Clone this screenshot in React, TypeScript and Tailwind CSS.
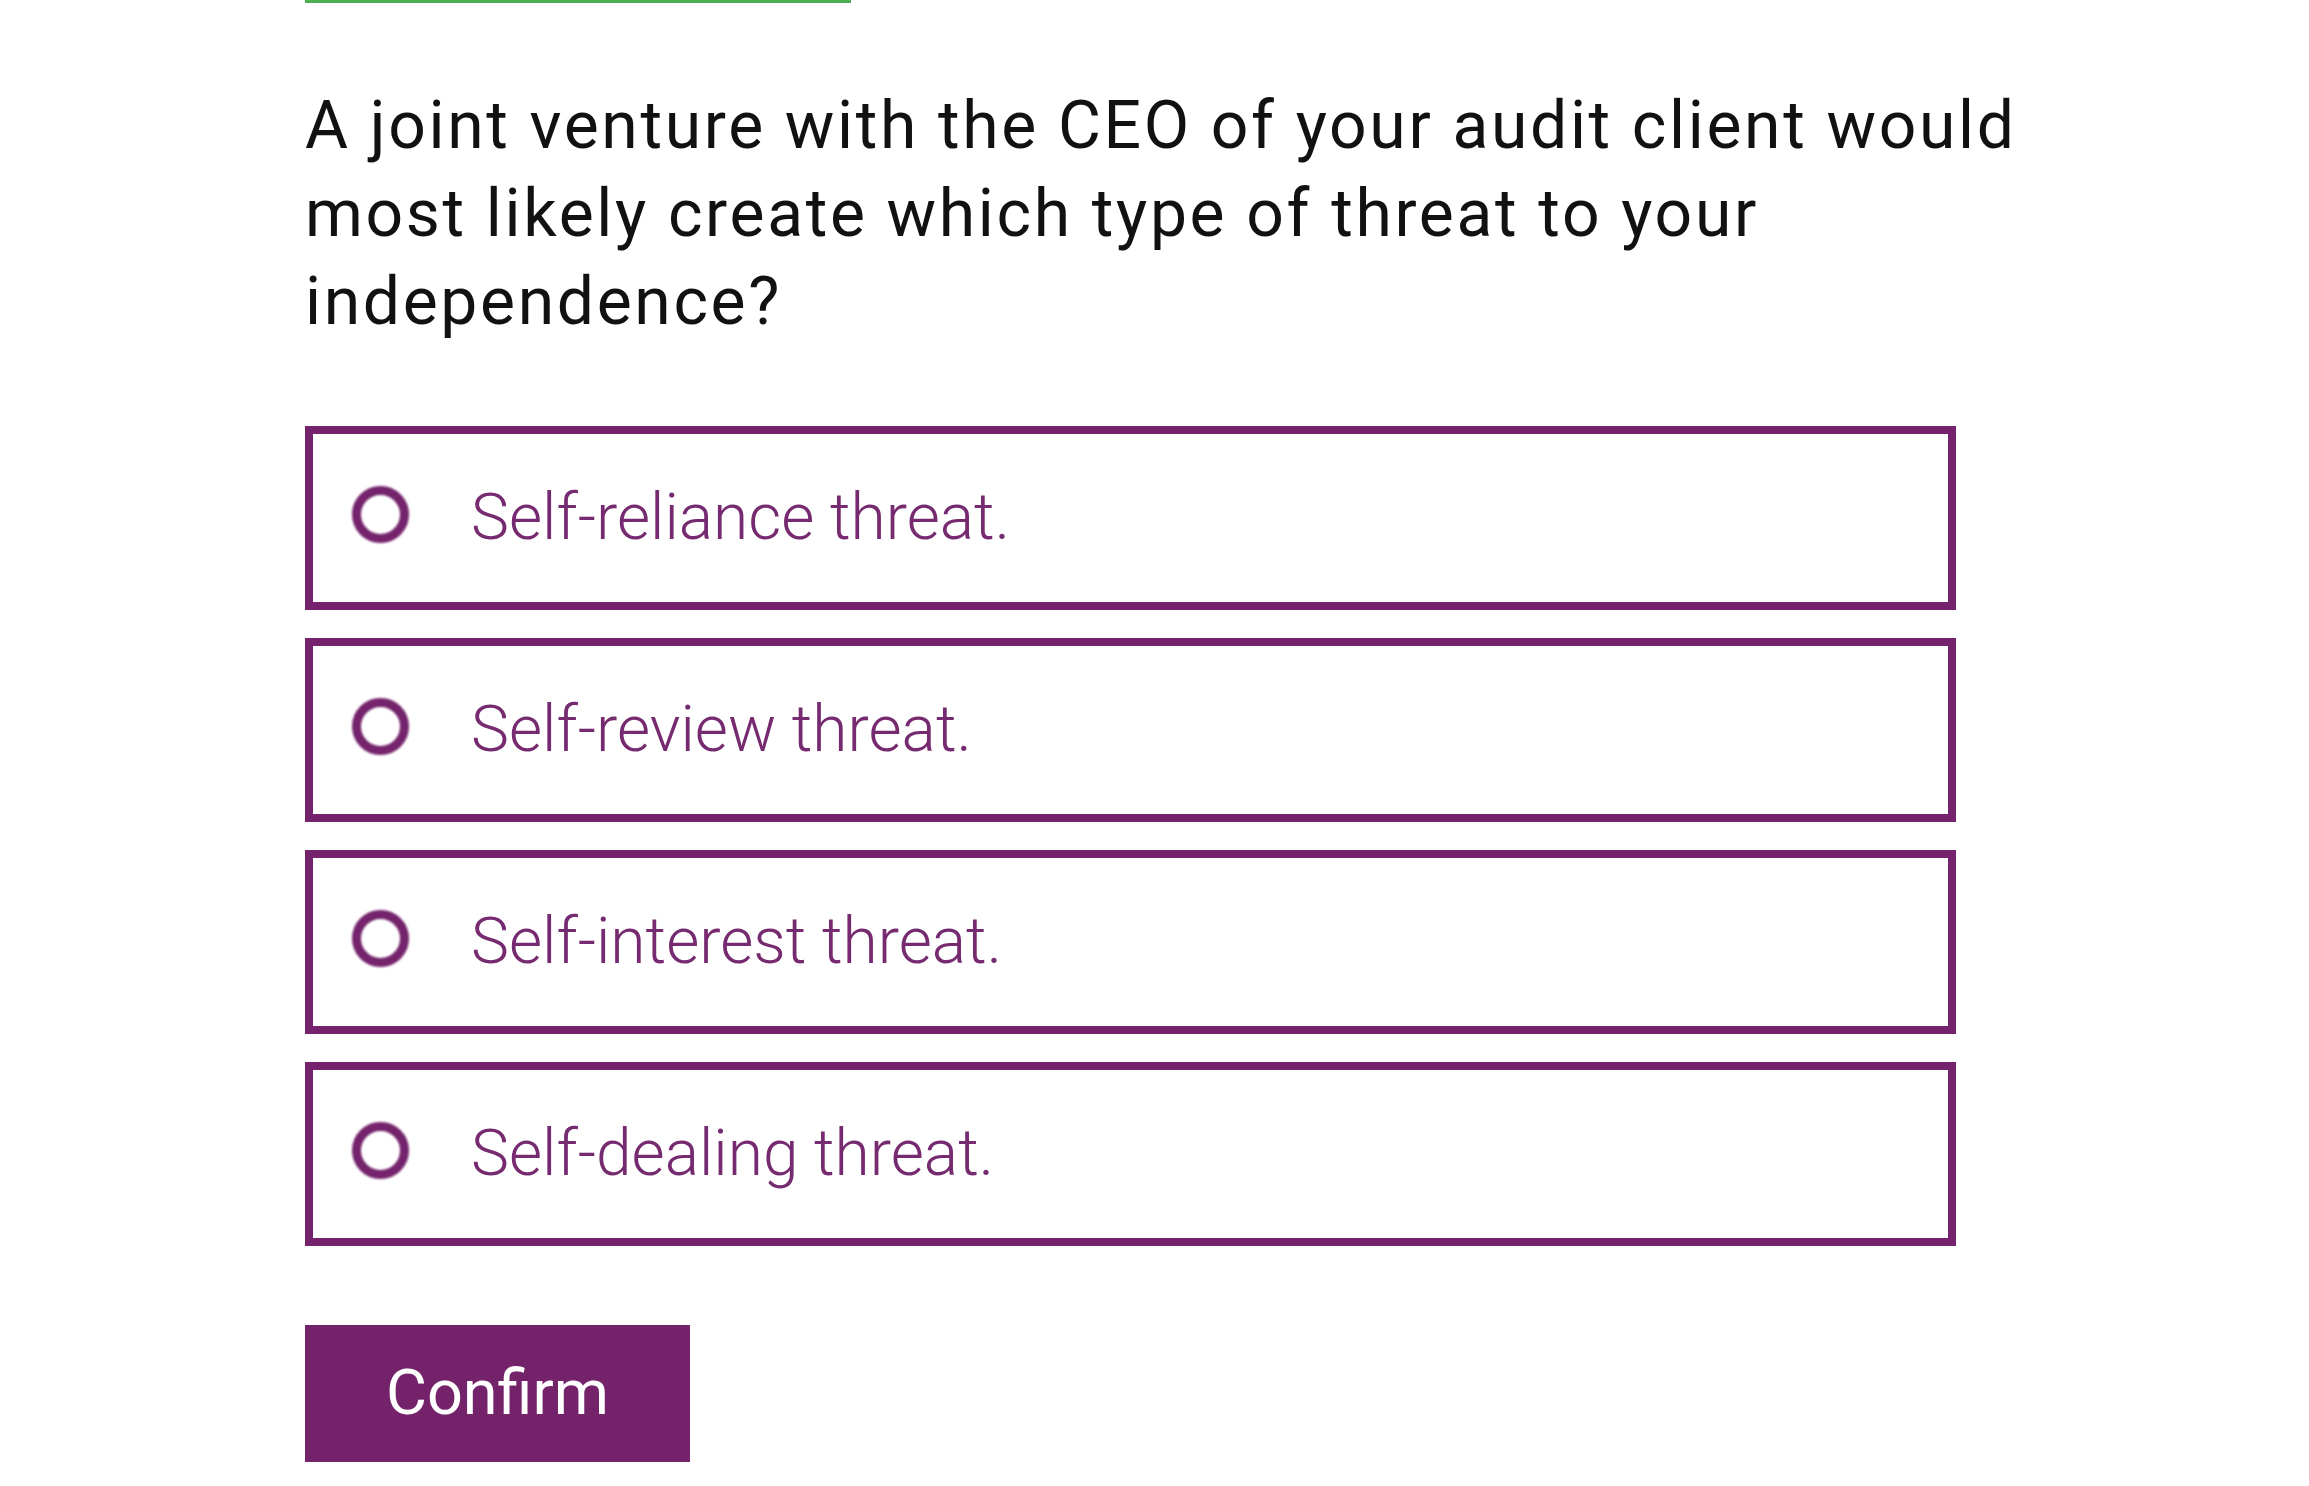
export default function App() {
  const options = [
    "Self-reliance threat.",
    "Self-review threat.",
    "Self-interest threat.",
    "Self-dealing threat.",
  ];

  return (
    <div className="min-h-screen w-full bg-white font-['Roboto',sans-serif]">
      <div className="ml-[305px] flex flex-col">
        {/* progress bar */}
        <div className="h-[3px] w-[546px] bg-[#4caf50]" />

        <h1 className="mt-[79px] w-[1820px] text-[66px] font-normal leading-[88px] tracking-[2.65px] text-[#111111]">
          A joint venture with the CEO of your audit client would most likely create which type of threat to your independence?
        </h1>

        <div className="mt-[80px] flex w-[1651px] flex-col gap-[28px]">
          {options.map((opt) => (
            <label
              key={opt}
              className="flex h-[184px] items-center border-[8px] border-[#74236c] bg-white pl-[39px]"
            >
              <span className="mb-[8px] block h-[57px] w-[57px] shrink-0 rounded-full border-[9px] border-[#74236c] blur-[1px]" />
              <span className="ml-[62px] text-[64px] font-light text-[#762a6f]">{opt}</span>
            </label>
          ))}
        </div>

        <button className="mt-[79px] flex h-[137px] w-[385px] items-center justify-center bg-[#74226a] text-[63px] font-normal text-white">
          Confirm
        </button>
      </div>
    </div>
  );
}
